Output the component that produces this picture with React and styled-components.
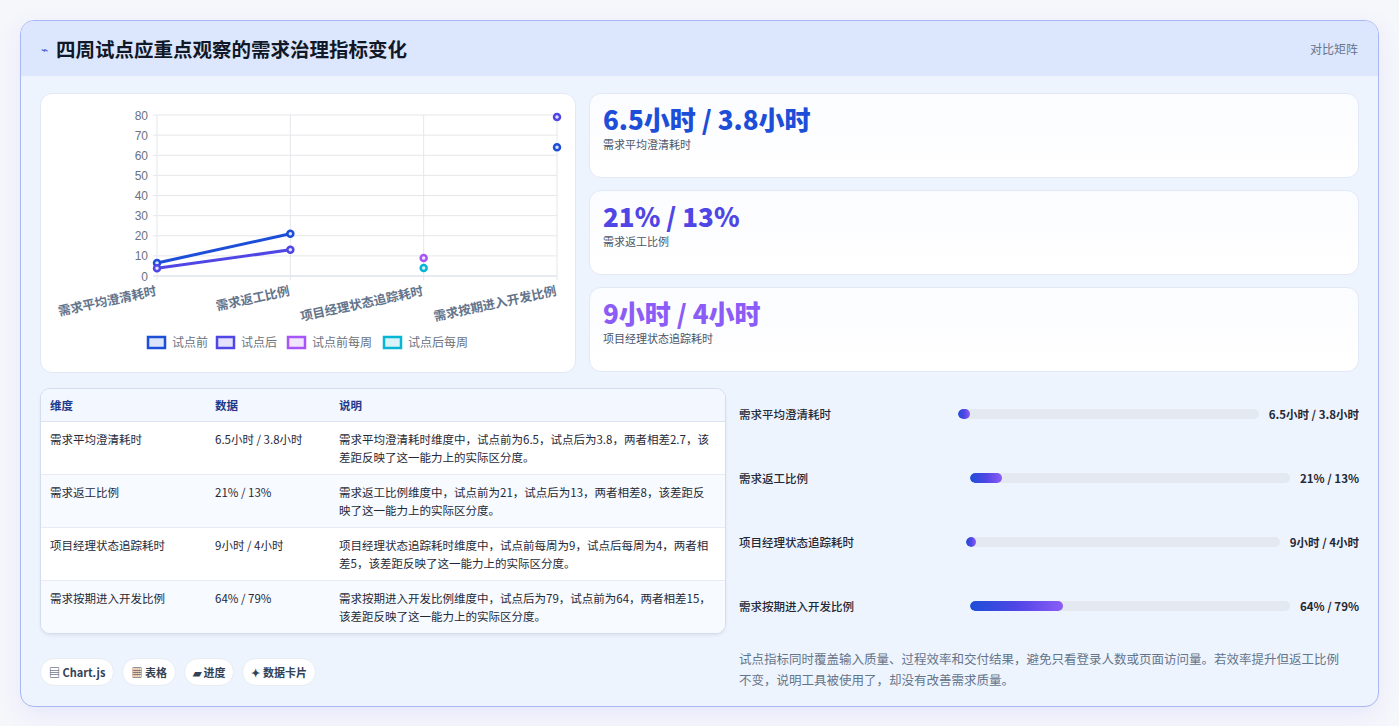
import React from "react";
import styled, { createGlobalStyle } from "styled-components";

const Global = createGlobalStyle`
  html, body { margin: 0; background: #f6f7fb; }
  body { font-family: "Noto Sans CJK SC", "Noto Sans", sans-serif; color: #1e293b; }
  * { box-sizing: border-box; }
`;

const Page = styled.div`padding: 20px 20px 21px 20px;`;
const Card = styled.div`
  border: 1px solid #a9b8f5; border-radius: 14px; overflow: hidden;
  background: #eef4fe; box-shadow: 0 8px 24px rgba(99,102,241,0.10);
`;
const Header = styled.div`
  height: 55px; background: #dce7fe; display: flex; align-items: center;
  justify-content: space-between; padding: 0 20px;
`;
const Title = styled.h1`
  margin: 0; font-size: 19.5px; font-weight: 700; color: #111827; display: flex; align-items: center; gap: 8px;
`;
const Spark = styled.span`color: #3b5bdb; font-size: 12px; font-weight: 400;`;
const Tag = styled.span`font-size: 12px; color: #64748b;`;
const Body = styled.div`padding: 17px 19px 16px 19px; display: flex; flex-direction: column; gap: 15px;`;
const TopGrid = styled.div`display: grid; grid-template-columns: 536px 1fr; gap: 13px;`;
const Panel = styled.div`
  background: #fff; border: 1px solid #e2e8f5; border-radius: 12px;
`;
const ChartPanel = styled(Panel)`height: 280px; padding: 0;`;
const Stats = styled.div`display: flex; flex-direction: column; gap: 12px;`;
const Stat = styled(Panel)`
  height: 85px; padding: 9px 13px;
  background: linear-gradient(180deg, #fbfcff, #ffffff);
`;
const StatValue = styled.div`font-size: 26px; font-weight: 800; color: ${p => p.$c}; line-height: 32px;`;
const StatLabel = styled.div`font-size: 11px; color: #475569; margin-top: 1px;`;

const BottomGrid = styled.div`display: grid; grid-template-columns: 686px 1fr; gap: 13px;`;
const Left = styled.div`display: flex; flex-direction: column; gap: 24px;`;
const Table = styled.table`
  width: 100%; border-collapse: separate; border-spacing: 0; border: 1px solid #d4dcef;
  border-radius: 10px; overflow: hidden; font-size: 11.5px; background: #fff;
  box-shadow: 0 2px 3px rgba(15,23,42,0.06);
`;
const Th = styled.th`
  text-align: left; font-weight: 600; color: #1e3a8a; padding: 0 9px; height: 33px;
  background: #f3f7ff; border-bottom: 1px solid #dbe3f3; width: ${p => p.$w || "auto"};
`;
const Td = styled.td`
  padding: 8px 12px 8px 9px; vertical-align: top; line-height: 18px; color: #1f2937;
  background: ${p => (p.$alt ? "#f7faff" : "#fff")};
  border-top: ${p => (p.$first ? "none" : "1px solid #e6ebf5")};
`;
const Chips = styled.div`display: flex; gap: 8px;`;
const Chip = styled.span`
  font-size: 11px; font-weight: 600; color: #334155; background: #fff; border: 1px solid #e6ebf5;
  border-radius: 14px; height: 28px; padding: 0 8px; display: inline-flex; align-items: center; gap: 3px;
`;
const Right = styled.div`display: flex; flex-direction: column; gap: 12px;`;
const BarRow = styled.div`
  display: flex; align-items: center; height: 52px; gap: 10px; font-size: 11.5px;
`;
const BarLabel = styled.div`width: ${p => p.$w}px; font-weight: 500; color: #1f2937;`;
const Track = styled.div`flex: 1; height: 10px; background: #e4e8f1; border-radius: 5px; overflow: hidden;`;
const Fill = styled.div`height: 100%; border-radius: 5px; background: linear-gradient(90deg, #1d4ed8, #4f46e5 50%, #8b5cf6);`;
const BarValue = styled.div`font-weight: 700; color: #1f2937; white-space: nowrap;`;
const Note = styled.p`margin: 4px 0 0; font-size: 12.5px; color: #64748b; line-height: 21px; padding-right: 14px;`;

const cats = ["需求平均澄清耗时", "需求返工比例", "项目经理状态追踪耗时", "需求按期进入开发比例"];
const series = [
  { c: "#1d4ed8", f: "#dbe4fb", name: "试点前", v: [6.5, 21, null, 64] },
  { c: "#4f46e5", f: "#e3e1fb", name: "试点后", v: [3.8, 13, null, 79] },
  { c: "#a855f7", f: "#f1e6fd", name: "试点前每周", v: [null, null, 9, null] },
  { c: "#06b6d4", f: "#d9f3f8", name: "试点后每周", v: [null, null, 4, null] },
];

function Chart() {
  const x0 = 116, x1 = 516, yb = 182, yt = 21;
  const xs = i => x0 + (i * (x1 - x0)) / 3;
  const ys = v => yb - (v / 80) * (yb - yt);
  const legend = [[107, "试点前"], [176, "试点后"], [247, "试点前每周"], [343, "试点后每周"]];
  return (
    <svg width="535" height="278" viewBox="0 0 535 278" style={{ display: "block" }}>
      {[0, 10, 20, 30, 40, 50, 60, 70, 80].map(t => (
        <g key={t}>
          <line x1={x0 - 4} x2={x1} y1={ys(t)} y2={ys(t)} stroke={t === 0 ? "#cfd6e2" : "#e5e7eb"} />
          <text x={x0 - 9} y={ys(t) + 4.5} textAnchor="end" fontSize="12" fill="#6b7280" fontFamily="Liberation Sans, sans-serif">{t}</text>
        </g>
      ))}
      {cats.map((c, i) => (
        <g key={c}>
          <line x1={xs(i)} x2={xs(i)} y1={yt} y2={yb + 4} stroke="#e5e7eb" />
          <text transform={`translate(${xs(i)},${yb + 19}) rotate(-12)`} textAnchor="end" fontSize="12.5" fontWeight="600" fill="#64748b">{c}</text>
        </g>
      ))}
      {series.map(s => {
        const pts = s.v.map((v, i) => (v == null ? null : [xs(i), ys(v)]));
        const segs = [];
        for (let i = 0; i < 3; i++) if (pts[i] && pts[i + 1]) segs.push([pts[i], pts[i + 1]]);
        return (
          <g key={s.name}>
            {segs.map((g, k) => <line key={k} x1={g[0][0]} y1={g[0][1]} x2={g[1][0]} y2={g[1][1]} stroke={s.c} strokeWidth="3" />)}
            {pts.map((p, k) => p && <circle key={k} cx={p[0]} cy={p[1]} r="3" fill={s.f} stroke={s.c} strokeWidth="2.5" />)}
          </g>
        );
      })}
      {series.map((s, i) => (
        <g key={s.name}>
          <rect x={legend[i][0]} y={243} width={17} height={11} fill={s.f} stroke={s.c} strokeWidth="2.5" />
          <text x={legend[i][0] + 24} y={253} fontSize="12" fill="#6b7280">{s.name}</text>
        </g>
      ))}
    </svg>
  );
}

const rows = [
  ["需求平均澄清耗时", "6.5小时 / 3.8小时", "需求平均澄清耗时维度中，试点前为6.5，试点后为3.8，两者相差2.7，该差距反映了这一能力上的实际区分度。"],
  ["需求返工比例", "21% / 13%", "需求返工比例维度中，试点前为21，试点后为13，两者相差8，该差距反映了这一能力上的实际区分度。"],
  ["项目经理状态追踪耗时", "9小时 / 4小时", "项目经理状态追踪耗时维度中，试点前每周为9，试点后每周为4，两者相差5，该差距反映了这一能力上的实际区分度。"],
  ["需求按期进入开发比例", "64% / 79%", "需求按期进入开发比例维度中，试点后为79，试点前为64，两者相差15，该差距反映了这一能力上的实际区分度。"],
];
const bars = [
  ["需求平均澄清耗时", 209, 4, "6.5小时 / 3.8小时"],
  ["需求返工比例", 221, 10, "21% / 13%"],
  ["项目经理状态追踪耗时", 217, 3, "9小时 / 4小时"],
  ["需求按期进入开发比例", 221, 29, "64% / 79%"],
];

export default function App() {
  return (
    <Page>
      <Global />
      <Card>
        <Header>
          <Title><Spark>⌁</Spark>四周试点应重点观察的需求治理指标变化</Title>
          <Tag>对比矩阵</Tag>
        </Header>
        <Body>
          <TopGrid>
            <ChartPanel><Chart /></ChartPanel>
            <Stats>
              <Stat><StatValue $c="#1d4ed8">6.5小时 / 3.8小时</StatValue><StatLabel>需求平均澄清耗时</StatLabel></Stat>
              <Stat><StatValue $c="#4f46e5">21% / 13%</StatValue><StatLabel>需求返工比例</StatLabel></Stat>
              <Stat><StatValue $c="#8b5cf6">9小时 / 4小时</StatValue><StatLabel>项目经理状态追踪耗时</StatLabel></Stat>
            </Stats>
          </TopGrid>
          <BottomGrid>
            <Left>
              <Table>
                <thead><tr><Th $w="165px">维度</Th><Th $w="124px">数据</Th><Th>说明</Th></tr></thead>
                <tbody>
                  {rows.map((r, i) => (
                    <tr key={r[0]}>
                      {r.map((c, j) => <Td key={j} $alt={i % 2 === 1} $first={i === 0}>{c}</Td>)}
                    </tr>
                  ))}
                </tbody>
              </Table>
              <Chips>
                <Chip>▤ Chart.js</Chip>
                <Chip>▦ 表格</Chip>
                <Chip>▰ 进度</Chip>
                <Chip>✦ 数据卡片</Chip>
              </Chips>
            </Left>
            <Right>
              {bars.map(b => (
                <BarRow key={b[0]}>
                  <BarLabel $w={b[1]}>{b[0]}</BarLabel>
                  <Track><Fill style={{ width: `${b[2]}%`, minWidth: 10 }} /></Track>
                  <BarValue>{b[3]}</BarValue>
                </BarRow>
              ))}
              <Note>试点指标同时覆盖输入质量、过程效率和交付结果，避免只看登录人数或页面访问量。若效率提升但返工比例不变，说明工具被使用了，却没有改善需求质量。</Note>
            </Right>
          </BottomGrid>
        </Body>
      </Card>
    </Page>
  );
}
